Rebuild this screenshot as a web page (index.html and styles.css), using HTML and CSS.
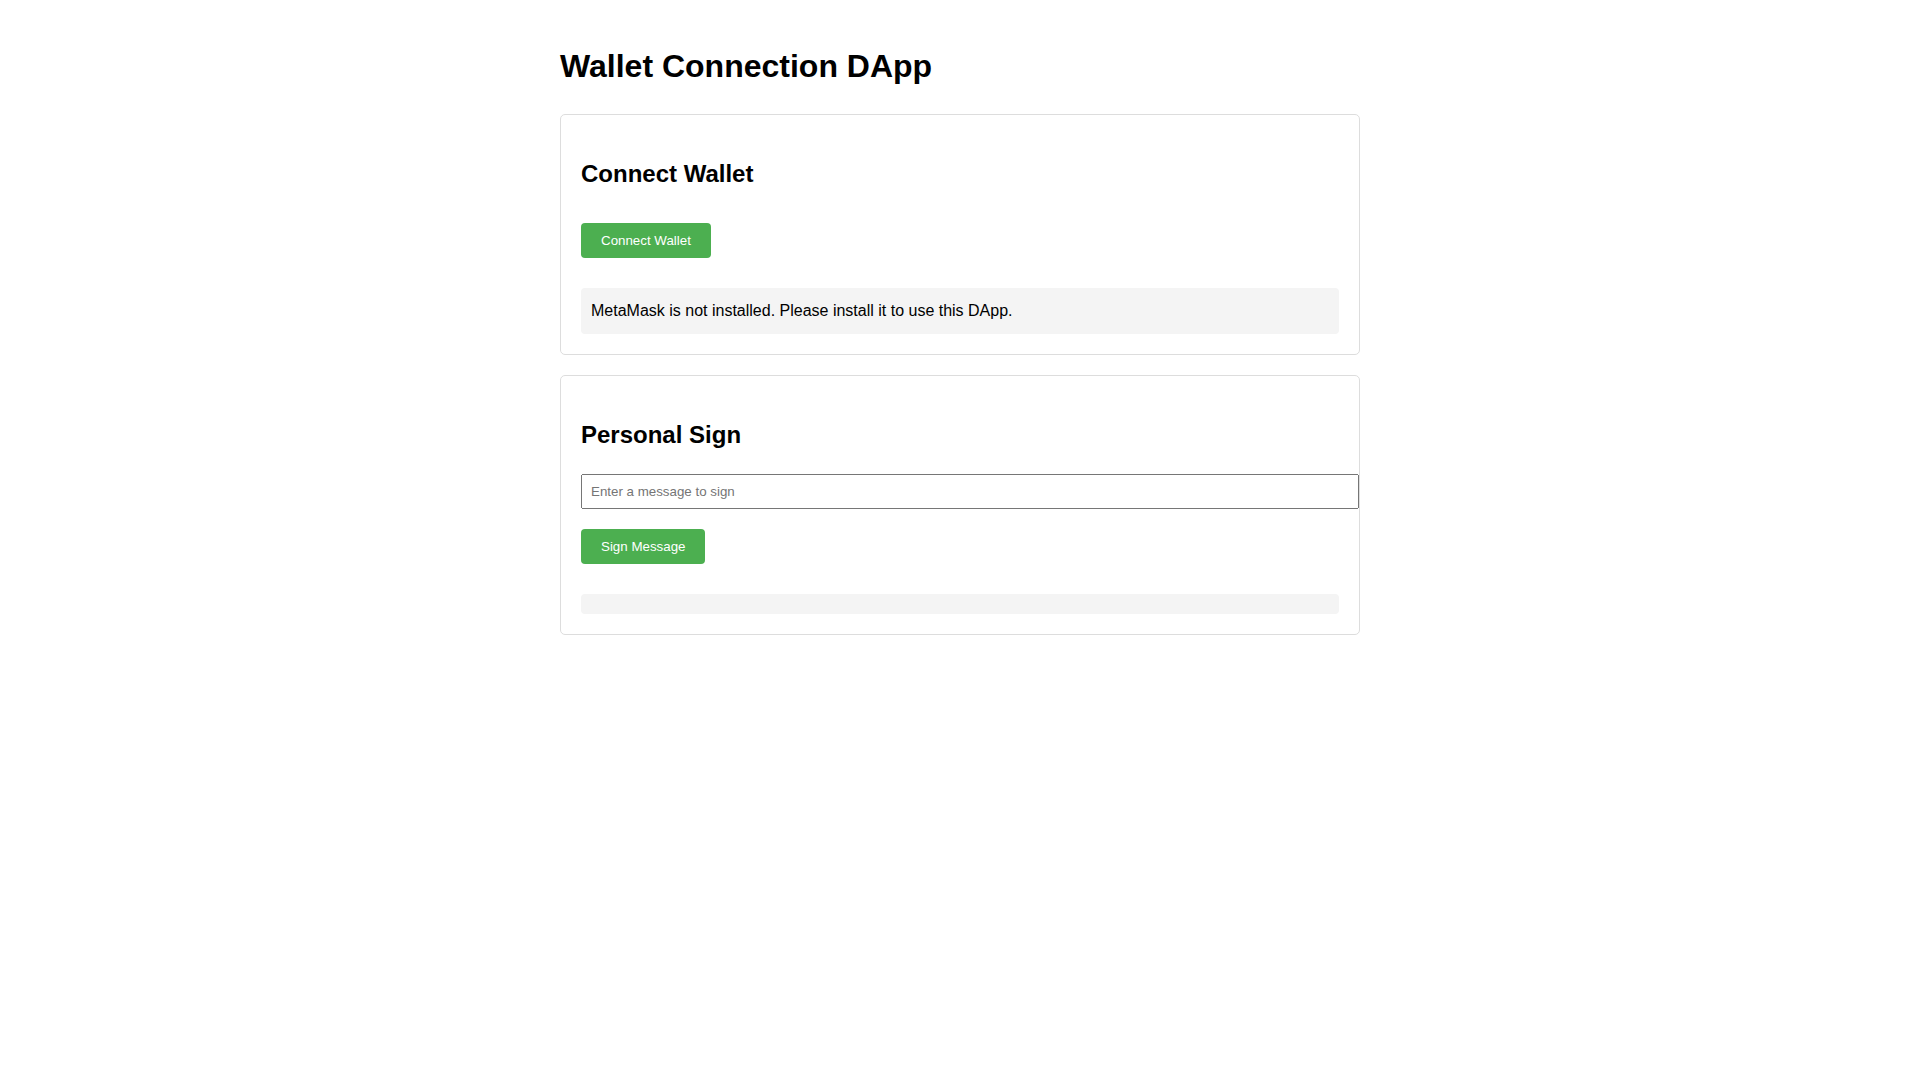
FILE: index.html
```html
<!DOCTYPE html>
<html lang="en">

<head>
    <meta charset="UTF-8">
    <meta name="viewport" content="width=device-width, initial-scale=1.0">
    <title>Wallet Connection DApp</title>
    <link rel="stylesheet" href="styles.css">
</head>

<body>
    <div class="container">
        <h1>Wallet Connection DApp</h1>

        <div class="section" aria-labelledby="connect-title">
            <h2 id="connect-title">Connect Wallet</h2>
            <button type="button" id="connect-button" class="btn">Connect Wallet</button>
            <div id="wallet-status" class="status">MetaMask is not installed. Please install it to use this DApp.</div>
        </div>

        <div class="section" aria-labelledby="sign-title">
            <h2 id="sign-title">Personal Sign</h2>
            <input type="text" id="message-input" placeholder="Enter a message to sign">
            <button type="button" id="sign-button" class="btn">Sign Message</button>
            <div id="sign-result" class="status"></div>
        </div>
    </div>
</body>

</html>
```

FILE: styles.css
```css
:root {
    --primary-color: #4caf50;
    --primary-color-hover: #45a049;
    --border-color: #ddd;
    --status-bg: #f4f4f4;
    --font-family: "Liberation Sans", Arial, sans-serif;
}

body {
    font-family: var(--font-family);
    line-height: 1.6;
    color: #000;
    background-color: #fff;
    margin: 0;
    padding: 20px;
}

.container {
    max-width: 800px;
    margin: 0 auto;
}

.section {
    border: 1px solid var(--border-color);
    border-radius: 5px;
    padding: 20px;
    margin-bottom: 20px;
}

.btn {
    background-color: var(--primary-color);
    color: #fff;
    font-family: var(--font-family);
    padding: 10px 20px;
    border: none;
    border-radius: 4px;
    cursor: pointer;
    margin: 10px 0;
}

.btn:hover {
    background-color: var(--primary-color-hover);
}

input[type="text"] {
    display: block;
    width: 100%;
    padding: 8px;
    margin-bottom: 10px;
    font-family: var(--font-family);
}

.status {
    margin-top: 20px;
    padding: 10px;
    background-color: var(--status-bg);
    border-radius: 4px;
}
```
